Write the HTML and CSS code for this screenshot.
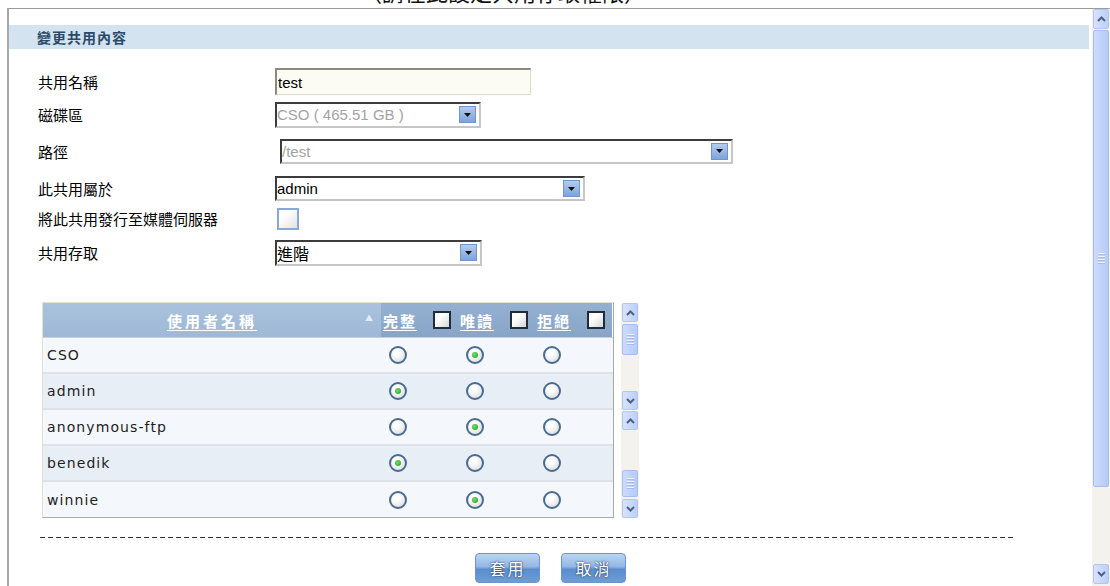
FILE: index.html
```html
<!DOCTYPE html>
<html lang="zh-Hant">
<head>
<meta charset="utf-8">
<title>變更共用內容</title>
<link rel="stylesheet" href="styles.css">
</head>
<body>
<div class="caption"><span>（請在此設定共用存取權限）</span></div>
<div class="frame">
  <div class="content">
    <div class="head-bar">變更共用內容</div>

    <div class="form">
      <div class="row r1">
        <div class="label">共用名稱</div>
        <div class="textbox">test</div>
      </div>
      <div class="row r2">
        <div class="label">磁碟區</div>
        <div class="select disabled w-disk"><span class="val">CSO ( 465.51 GB )</span><span class="drop"><svg width="9" height="6" viewBox="0 0 9 6"><path d="M1 1h7L4.5 5z" fill="#111"/></svg></span></div>
      </div>
      <div class="row r3">
        <div class="label">路徑</div>
        <div class="select disabled w-path"><span class="val">/test</span><span class="drop"><svg width="9" height="6" viewBox="0 0 9 6"><path d="M1 1h7L4.5 5z" fill="#111"/></svg></span></div>
      </div>
      <div class="row r4">
        <div class="label">此共用屬於</div>
        <div class="select w-owner"><span class="val">admin</span><span class="drop"><svg width="9" height="6" viewBox="0 0 9 6"><path d="M1 1h7L4.5 5z" fill="#111"/></svg></span></div>
      </div>
      <div class="row r5">
        <div class="label">將此共用發行至媒體伺服器</div>
        <div class="check-lg"></div>
      </div>
      <div class="row r6">
        <div class="label">共用存取</div>
        <div class="select w-access"><span class="val cjk">進階</span><span class="drop"><svg width="9" height="6" viewBox="0 0 9 6"><path d="M1 1h7L4.5 5z" fill="#111"/></svg></span></div>
      </div>
    </div>

    <div class="grid-wrap">
      <div class="page">
        <div class="table top">
          <div class="thead">
            <div class="th-name"><span></span><span class="hlink wide">使用者名稱</span><span class="sort">▲</span></div>
            <div class="th-perm"><span class="hlink">完整</span><span class="check-sm"></span></div>
            <div class="th-perm"><span class="hlink">唯讀</span><span class="check-sm"></span></div>
            <div class="th-perm"><span class="hlink">拒絕</span><span class="check-sm"></span></div>
          </div>
          <div class="tr odd">
            <div class="td-name">CSO</div>
            <div class="td-perm"><span class="radio"></span></div>
            <div class="td-perm"><span class="radio on"></span></div>
            <div class="td-perm"><span class="radio"></span></div>
          </div>
          <div class="tr even">
            <div class="td-name">admin</div>
            <div class="td-perm"><span class="radio on"></span></div>
            <div class="td-perm"><span class="radio"></span></div>
            <div class="td-perm"><span class="radio"></span></div>
          </div>
        </div>
        <div class="vscroll sb-a">
          <div class="sb-btn"><svg width="9" height="6" viewBox="0 0 9 6"><path d="M1 5l3.5-3.5L8 5" fill="none" stroke="#4d6185" stroke-width="2"/></svg></div>
          <div class="sb-thumb t-a"><i></i><i></i><i></i><i></i></div>
          <div class="sb-track"></div>
          <div class="sb-btn"><svg width="9" height="6" viewBox="0 0 9 6"><path d="M1 1l3.5 3.5L8 1" fill="none" stroke="#4d6185" stroke-width="2"/></svg></div>
        </div>
      </div>

      <div class="page">
        <div class="table bottom">
          <div class="tr odd">
            <div class="td-name">anonymous-ftp</div>
            <div class="td-perm"><span class="radio"></span></div>
            <div class="td-perm"><span class="radio on"></span></div>
            <div class="td-perm"><span class="radio"></span></div>
          </div>
          <div class="tr even">
            <div class="td-name">benedik</div>
            <div class="td-perm"><span class="radio on"></span></div>
            <div class="td-perm"><span class="radio"></span></div>
            <div class="td-perm"><span class="radio"></span></div>
          </div>
          <div class="tr odd last">
            <div class="td-name">winnie</div>
            <div class="td-perm"><span class="radio"></span></div>
            <div class="td-perm"><span class="radio on"></span></div>
            <div class="td-perm"><span class="radio"></span></div>
          </div>
        </div>
        <div class="vscroll sb-b">
          <div class="sb-btn"><svg width="9" height="6" viewBox="0 0 9 6"><path d="M1 5l3.5-3.5L8 5" fill="none" stroke="#4d6185" stroke-width="2"/></svg></div>
          <div class="sb-track"></div>
          <div class="sb-thumb t-b"><i></i><i></i><i></i><i></i></div>
          <div class="sb-btn"><svg width="9" height="6" viewBox="0 0 9 6"><path d="M1 1l3.5 3.5L8 1" fill="none" stroke="#4d6185" stroke-width="2"/></svg></div>
        </div>
      </div>
    </div>

    <div class="rule"></div>
    <div class="actions">
      <button class="btn">套用</button>
      <button class="btn">取消</button>
    </div>
  </div>

  <div class="vscroll page-sb">
    <div class="sb-btn"><svg width="9" height="6" viewBox="0 0 9 6"><path d="M1 5l3.5-3.5L8 5" fill="none" stroke="#4d6185" stroke-width="2"/></svg></div>
    <div class="sb-thumb t-page"><i></i><i></i><i></i><i></i></div>
    <div class="sb-track"></div>
    <div class="sb-btn"><svg width="9" height="6" viewBox="0 0 9 6"><path d="M1 1l3.5 3.5L8 1" fill="none" stroke="#4d6185" stroke-width="2"/></svg></div>
  </div>
</div>
</body>
</html>
```

FILE: styles.css
```css
body {
  margin: 0;
  width: 1110px;
  height: 586px;
  overflow: hidden;
  background: #fff;
  font-family: "Noto Sans CJK TC", "Liberation Sans", sans-serif;
  color: #000;
}

/* parent page caption, mostly scrolled out of view */
.caption {
  height: 8px;
  overflow: hidden;
  display: flex;
  align-items: flex-end;
  padding-left: 360px;
}
.caption span {
  font-size: 22px;
  line-height: 22px;
  margin-bottom: 6px;
  white-space: nowrap;
  color: #111;
}

/* embedded frame */
.frame {
  display: flex;
  margin-left: 7px;
  height: 577px;
  border-top: 1px solid #9c9c9c;
  border-left: 2px solid #a9a9a9;
}
.content {
  flex: 1;
  min-width: 0;
  padding-top: 16px;
}

.head-bar {
  height: 24px;
  margin-right: 3px;
  padding-left: 28px;
  display: flex;
  align-items: center;
  background: #d3e4f0;
  color: #2b4a6b;
  font-size: 14px;
  font-weight: bold;
  letter-spacing: 1px;
  line-height: 1;
}

/* form */
.form {
  margin-top: 16px;
  padding-left: 29px;
}
.row {
  display: flex;
  align-items: center;
}
.r1 { height: 33px; }
.r2 { height: 33px; }
.r3 { height: 40px; }
.r4 { height: 35px; }
.r5 { height: 25px; }
.r6 { height: 43px; }

.label {
  width: 237px;
  flex: none;
  font-size: 15px;
  line-height: 1;
}

.textbox {
  box-sizing: border-box;
  width: 256px;
  height: 27px;
  padding-left: 1px;
  display: flex;
  align-items: center;
  background: #fcfcf4;
  border-style: solid;
  border-width: 2px 1px 1px 2px;
  border-color: #8a8a80 #dcdccc #dcdccc #8a8a80;
  font-family: "Liberation Sans", sans-serif;
  font-size: 15px;
}

.select {
  box-sizing: border-box;
  height: 25px;
  display: flex;
  align-items: center;
  justify-content: space-between;
  background: #fff;
  border-style: solid;
  border-width: 2px;
  border-color: #3c3c3c #c6c6c6 #c6c6c6 #3c3c3c;
  font-family: "Liberation Sans", sans-serif;
  font-size: 15px;
}
.select .val { white-space: nowrap; line-height: 1; }
.select .val.cjk { font-family: "Noto Sans CJK TC", sans-serif; font-size: 16px; }
.select.disabled .val { color: #a3a3a3; }
.w-disk { width: 206px; height: 26px; }
.w-path { width: 453px; margin-left: 5px; }
.w-owner { width: 310px; }
.w-access { width: 207px; height: 26px; }

.drop {
  box-sizing: border-box;
  width: 17px;
  height: 17px;
  margin-right: 3px;
  display: flex;
  align-items: center;
  justify-content: center;
  background: linear-gradient(#b3cbee, #7ea4d9);
  border: 1px solid #7096cb;
}

.check-lg {
  box-sizing: border-box;
  width: 22px;
  height: 22px;
  margin-left: 2px;
  border: 2px solid #8aa8d6;
  background: linear-gradient(135deg, #ffffff 30%, #e2e2e2);
}

/* permissions grid */
.grid-wrap {
  margin-top: 28px;
  margin-left: 33px;
  display: flex;
  flex-direction: column;
}
.page {
  display: flex;
  gap: 7px;
}
.table {
  width: 572px;
  box-sizing: border-box;
  border-left: 1px solid #e4e0d2;
  border-right: 1px solid #a8a8a8;
}
.table.top { border-top: 1px solid #e4e0d2; }
.table.bottom { border-bottom: 1px solid #a8a8a8; }

.thead {
  display: grid;
  grid-template-columns: 338px 77px 77px 77px;
  height: 34px;
  border-bottom: 1px solid #c5d0dc;
}
.th-name {
  display: grid;
  grid-template-columns: 1fr auto 1fr;
  align-items: center;
  background: linear-gradient(#aac2dd, #9eb8d6);
}
.sort {
  justify-self: end;
  padding-right: 8px;
  font-size: 8px;
  color: #e3ecf6;
  margin-top: -6px;
}
.th-perm {
  display: flex;
  align-items: center;
  padding-left: 2px;
  background: linear-gradient(#95b0d0, #88a5c8);
}
.hlink {
  width: 37px;
  color: #fff;
  font-size: 15px;
  font-weight: bold;
  letter-spacing: 2px;
  line-height: 1;
  text-decoration: underline;
  text-underline-offset: 3px;
  white-space: nowrap;
}
.hlink.wide {
  width: auto;
  letter-spacing: 3px;
}
.check-sm {
  box-sizing: border-box;
  width: 18px;
  height: 18px;
  margin-left: 13px;
  border: 2px solid #1f2c3b;
  background: linear-gradient(135deg, #ffffff 35%, #d6d6d6);
}

.tr {
  display: grid;
  grid-template-columns: 338px 77px 77px 77px;
  height: 34px;
  border-bottom: 2px solid #dde2e8;
}
.tr.odd { background: #f4f7fb; }
.tr.even { background: #e8eef6; }
.tr.last { border-bottom: 0; height: 35px; }

.td-name {
  display: flex;
  align-items: center;
  padding-left: 4px;
  font-family: "DejaVu Sans", sans-serif;
  font-size: 14px;
  letter-spacing: 1.1px;
  color: #1e1e1e;
}
.td-perm {
  display: flex;
  align-items: center;
  padding-left: 8px;
}
.radio {
  box-sizing: border-box;
  width: 18px;
  height: 18px;
  border-radius: 50%;
  border: 2px solid #476b93;
  background: radial-gradient(circle at 40% 35%, #ffffff 20%, #d8d8d8 95%);
  display: flex;
  align-items: center;
  justify-content: center;
}
.radio.on::after {
  content: "";
  width: 6px;
  height: 6px;
  border-radius: 50%;
  background: radial-gradient(circle at 40% 40%, #74dd6a, #1b9a22);
}

/* XP style scrollbars */
.vscroll {
  width: 18px;
  flex: none;
  display: flex;
  flex-direction: column;
  background: #f3f2ec;
}
.sb-btn {
  box-sizing: border-box;
  height: 19px;
  margin: 0 1px;
  display: flex;
  align-items: center;
  justify-content: center;
  background: linear-gradient(to right, #d7e3fd, #bccff9);
  border: 1px solid #b3c6f0;
  border-radius: 2px;
}
.sb-thumb {
  box-sizing: border-box;
  margin: 2px 1px;
  display: flex;
  flex-direction: column;
  align-items: center;
  justify-content: center;
  gap: 1px;
  background: linear-gradient(to right, #cddbfd, #b6cbf8);
  border: 1px solid #a6bdee;
  border-radius: 2px;
}
.sb-thumb i {
  display: block;
  width: 7px;
  height: 1px;
  background: #eef3fe;
  border-bottom: 1px solid #a5bbea;
}
.sb-track { flex: 1; }

.sb-a { margin-top: 1px; }
.t-a { height: 31px; }
.sb-b { margin-top: 1px; }
.t-b { height: 27px; }

.page-sb .sb-btn { height: 20px; }
.t-page { height: 457px; margin-top: 1px; }
.page-sb { padding-bottom: 2px; }

/* footer */
.rule {
  width: 975px;
  height: 1px;
  margin: 19px 0 0 31px;
  background: repeating-linear-gradient(to right, #333 0 5px, transparent 5px 8px);
}
.actions {
  display: flex;
  justify-content: center;
  gap: 21px;
  margin-top: 15px;
}
.btn {
  width: 65px;
  height: 30px;
  padding: 0;
  border: 1px solid #6b94c8;
  border-radius: 4px;
  background: linear-gradient(#bcd4f1 0%, #93b7e4 45%, #5a8dcc 55%, #6e9dd6 100%);
  color: #fff;
  font-family: "Noto Sans CJK TC", sans-serif;
  font-size: 16px;
  letter-spacing: 2px;
  line-height: 1;
  text-shadow: 0 0 2px #1d3d6a, 0 0 1px #1d3d6a;
}
```
